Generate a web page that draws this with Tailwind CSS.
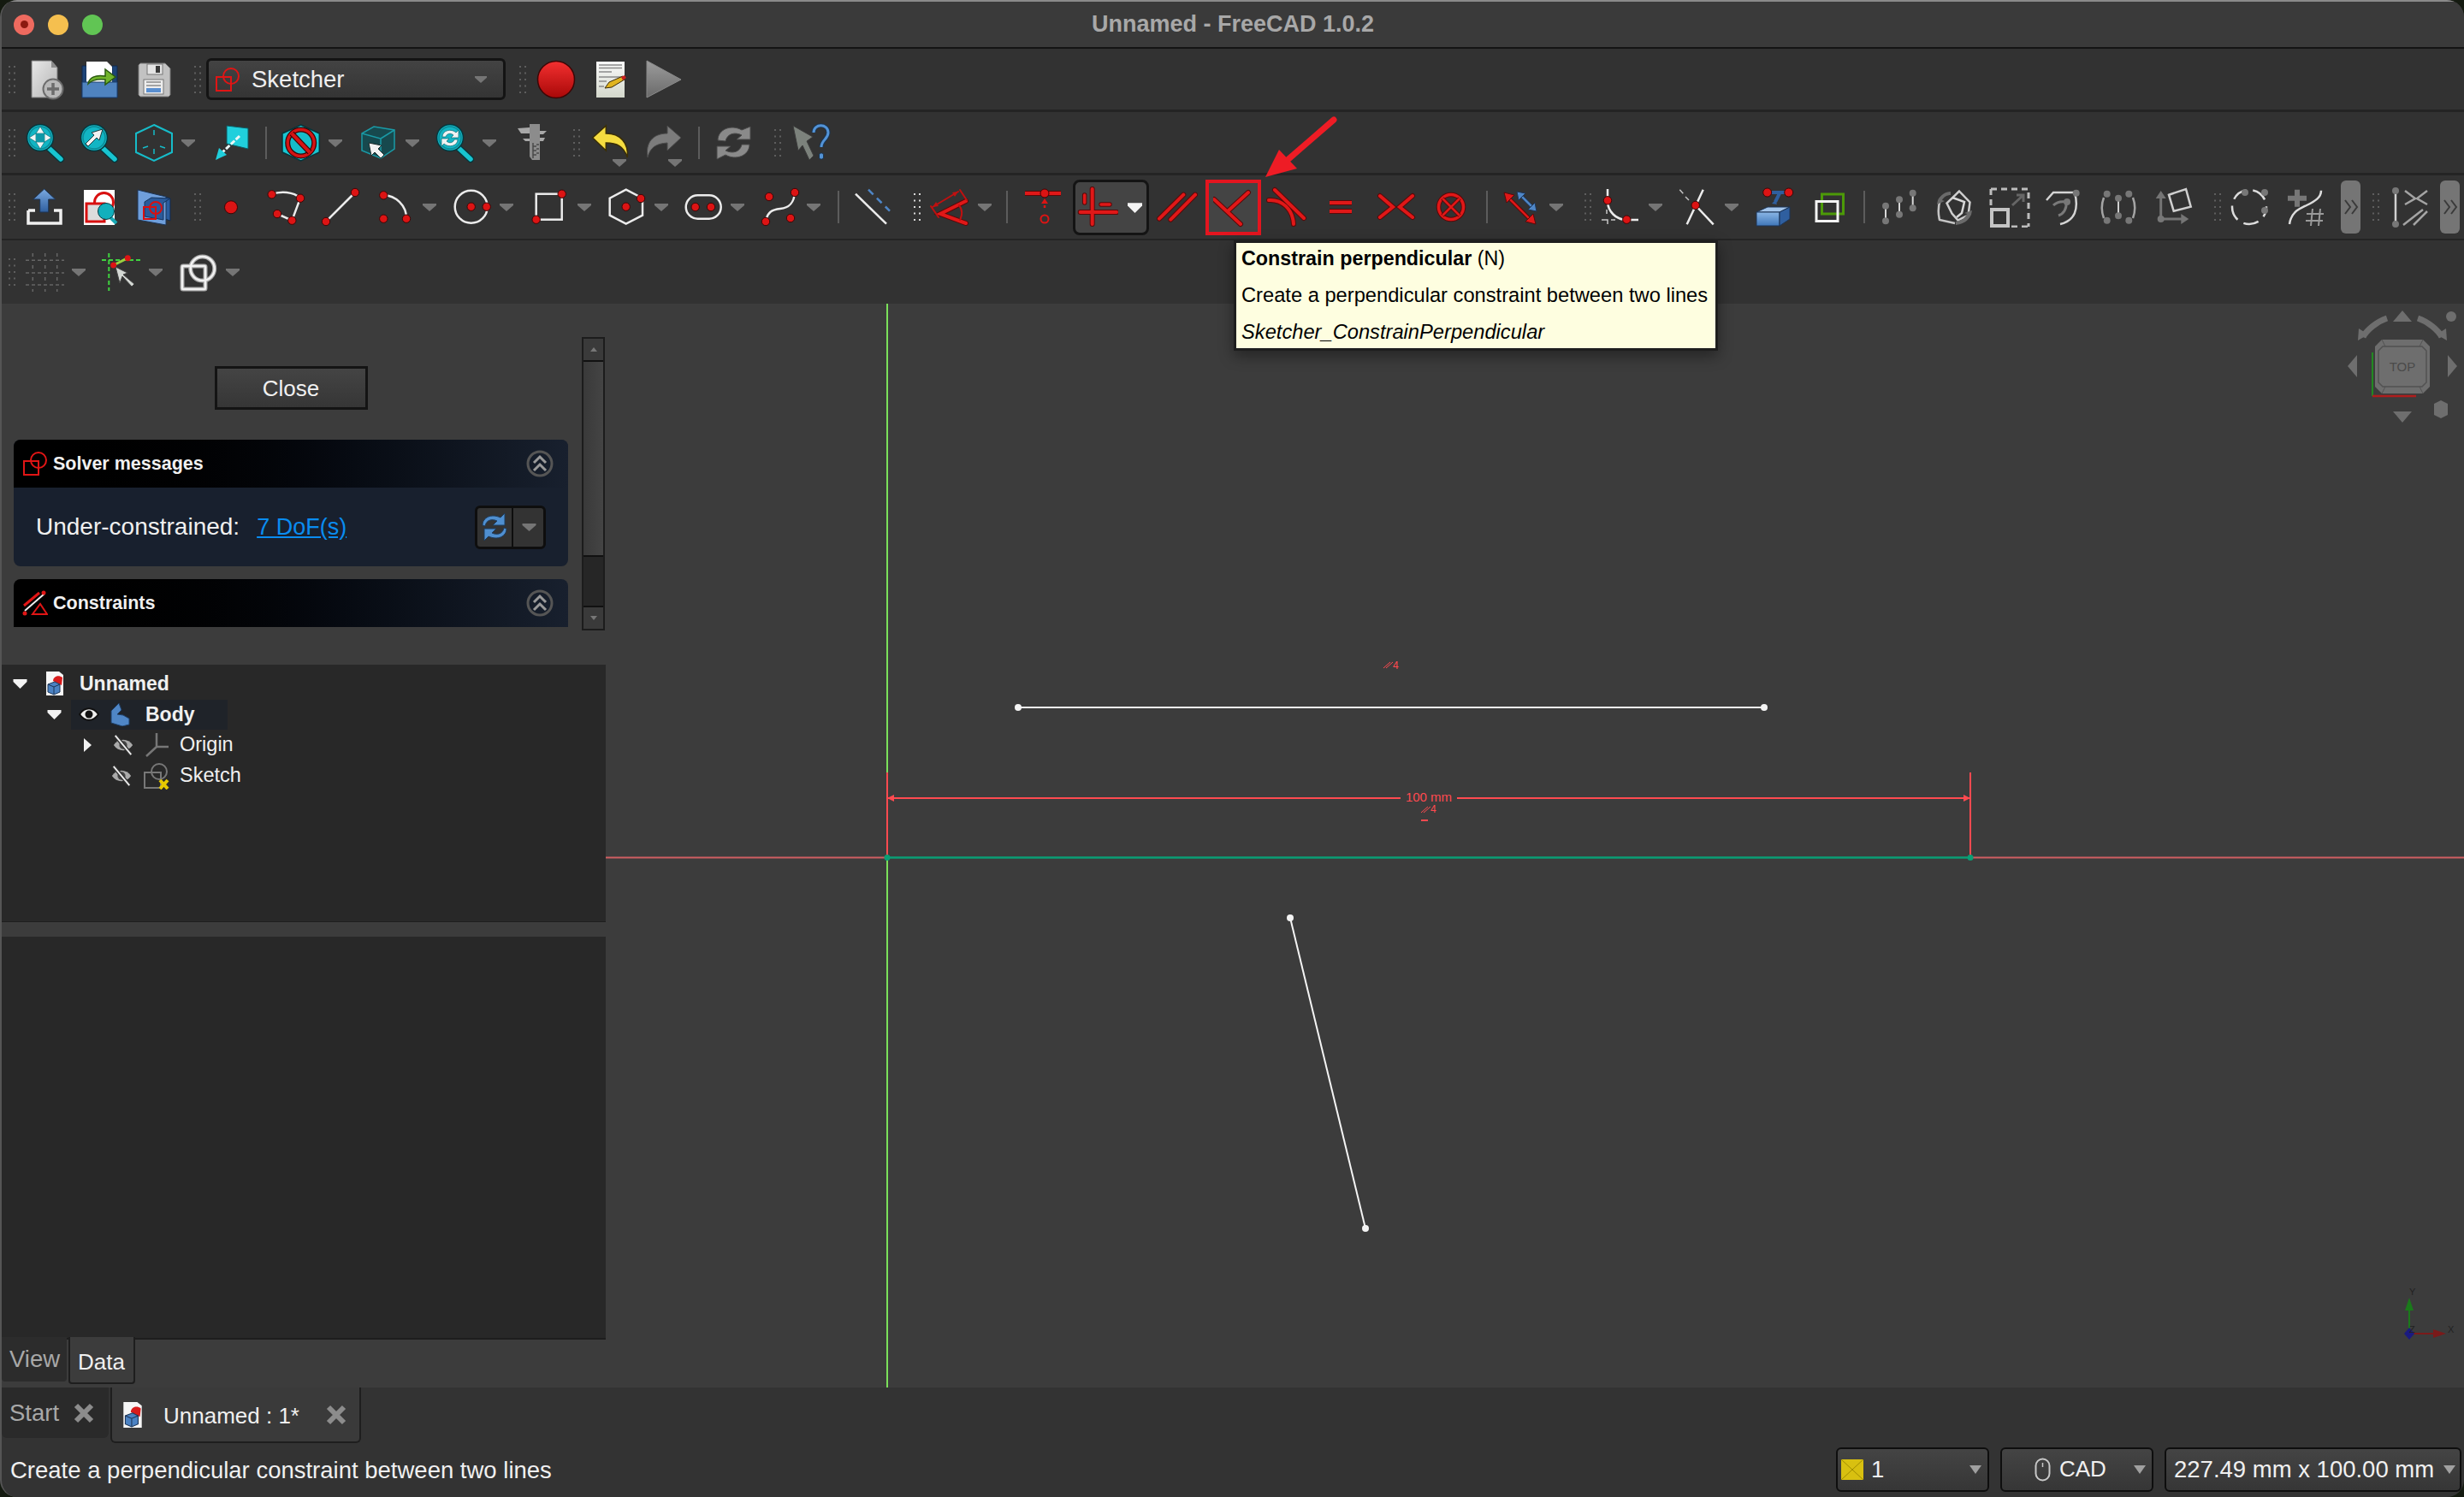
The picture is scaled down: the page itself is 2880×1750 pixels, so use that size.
<!DOCTYPE html>
<html>
<head>
<meta charset="utf-8">
<title>FreeCAD Sketcher</title>
<script src="https://cdn.jsdelivr.net/npm/@tailwindcss/browser@4"></script>
</head>
<body class="bg-[#141a10] overflow-hidden">
<!-- shared little icons -->
<svg class="hidden">
  <symbol id="arrow" viewBox="0 0 16 12"><path d="M0 2h16v2l-8 7-8-7z" fill="#757575"/></symbol>
  <symbol id="arrow-light" viewBox="0 0 16 12"><path d="M1 1h14l-7 10z" fill="#a0a0a0"/></symbol>
  <symbol id="arrow-white" viewBox="0 0 16 12"><path d="M0 1h16v3l-8 8-8-8z" fill="#f4f4f4"/></symbol>
  <symbol id="grip" viewBox="0 0 8 32"><g fill="#5e5e5e"><rect width="2" height="2"/><rect x="6" width="2" height="2"/><rect y="7.5" width="2" height="2"/><rect x="6" y="7.5" width="2" height="2"/><rect y="15" width="2" height="2"/><rect x="6" y="15" width="2" height="2"/><rect y="22.5" width="2" height="2"/><rect x="6" y="22.5" width="2" height="2"/><rect y="30" width="2" height="2"/><rect x="6" y="30" width="2" height="2"/></g></symbol>
  <symbol id="grip-light" viewBox="0 0 8 32"><g fill="#d8d8d8"><rect width="2" height="2"/><rect x="6" width="2" height="2"/><rect y="7.5" width="2" height="2"/><rect x="6" y="7.5" width="2" height="2"/><rect y="15" width="2" height="2"/><rect x="6" y="15" width="2" height="2"/><rect y="22.5" width="2" height="2"/><rect x="6" y="22.5" width="2" height="2"/><rect y="30" width="2" height="2"/><rect x="6" y="30" width="2" height="2"/></g></symbol>
  <symbol id="doc" viewBox="0 0 20 28"><path d="M0 0h15l5 4v24H0z" fill="#f6f6f6"/><path d="M8 11c0-5 6-8 11-4l-1 9z" fill="#d81c1c"/><path d="M2 15l8-3 6 3v9l-7 3-7-3z" fill="#4b82c3" stroke="#1c3557"/><path d="M2 15l7 3 7-3M9 18v9" stroke="#1c3557" fill="none"/></symbol>
  <symbol id="eye-off" viewBox="0 0 28 28"><path d="M2 14c6-9 18-9 24 0-6 9-18 9-24 0z" fill="#aaa"/><circle cx="14" cy="14" r="5" fill="#444"/><path d="M4 2l20 24" stroke="#333" stroke-width="5"/><path d="M4 2l20 24" stroke="#eee" stroke-width="2"/></symbol>
  <symbol id="chevrons" viewBox="0 0 32 32"><circle cx="16" cy="16" r="14" fill="none" stroke="#555" stroke-width="3"/><path d="M9 15l7-7 7 7M9 24l7-7 7 7" fill="none" stroke="#9a9a9a" stroke-width="3"/></symbol>
  <symbol id="sketch-red" viewBox="0 0 30 30"><rect x="2" y="12" width="17" height="16" fill="none" stroke="#e01515" stroke-width="2"/><circle cx="19" cy="11" r="9" fill="none" stroke="#e01515" stroke-width="2"/></symbol>
  <symbol id="lens" viewBox="0 0 48 48"><path d="M29 30l14 13" stroke="#06363c" stroke-width="8" stroke-linecap="round"/><path d="M29 30l14 13" stroke="#18c4d0" stroke-width="5.5" stroke-linecap="round"/><circle cx="19" cy="18" r="15.5" fill="#12b5c4" stroke="#06363c" stroke-width="1.5"/><circle cx="19" cy="18" r="13" fill="none" stroke="#0c8b97" stroke-width="1.5"/></symbol>
  <symbol id="over" viewBox="0 0 18 20"><path d="M2 2l6 8-6 8M10 2l6 8-6 8" fill="none" stroke="#3a3a3a" stroke-width="2"/></symbol>
</svg>

<div class="w-[2880px] h-[1750px] flex flex-col rounded-[20px] overflow-hidden bg-[#333333] text-[26px] text-[#f0f0f0] relative border-l-2 border-[#555555] font-['Liberation_Sans',Arial,sans-serif]">

  <!-- title bar -->
  <div class="h-[57px] shrink-0 flex items-center relative border-t-2 border-b-2 border-t-[#8a8a8a] border-b-[#141414] bg-[#3a3a3a]">
    <div class="flex items-center gap-[16px] ml-[14px]">
      <div class="w-[24px] h-[24px] rounded-full bg-[#ee6a5f] flex items-center justify-center"><div class="w-[9px] h-[9px] rounded-full bg-[#8c1a10]"></div></div>
      <div class="w-[24px] h-[24px] rounded-full bg-[#f5bf4f]"></div>
      <div class="w-[24px] h-[24px] rounded-full bg-[#61c554]"></div>
    </div>
    <div class="absolute inset-x-0 text-center text-[27px] font-bold text-[#a8a8a8]">Unnamed - FreeCAD 1.0.2</div>
  </div>

  <!-- toolbar 1 -->
  <div class="h-[74px] shrink-0 flex items-center bg-[#323232] border-b-[3px] border-[#242424]">
    <svg class="ml-[8px] w-[8px] h-[32px]"><use href="#grip"/></svg>
    <svg class="ml-[12px] w-[48px] h-[48px]" viewBox="0 0 48 48"><defs><linearGradient id="page" x1="0" y1="0" x2="1" y2="1"><stop offset="0" stop-color="#e8e8e8"/><stop offset="1" stop-color="#b4b4b4"/></linearGradient></defs><path d="M7 2h23l7 8v35H7z" fill="url(#page)" stroke="#777"/><path d="M30 2v8h7z" fill="#8c8c8c"/><circle cx="32" cy="35" r="11.5" fill="#b8b8b8" stroke="#6c6c6c" stroke-width="2"/><path d="M32 28v14M25 35h14" stroke="#6c6c6c" stroke-width="3.5"/></svg>
    <svg class="ml-[14px] w-[48px] h-[48px]" viewBox="0 0 48 48"><path d="M4 8h5v17h30V8h6v37H4z" fill="#1d4478" stroke="#12294a"/><path d="M9 3h24l6 6v18H9z" fill="#fff"/><path d="M4 27h41v18H4z" fill="#4f83bf" stroke="#1d3e6c"/><path d="M11 29c1-7 8-11 20-9v-8l12 9-12 9v-6c-9-1-15 0-20 5z" fill="#72b52c" stroke="#2a5a10" stroke-width="1.5"/></svg>
    <svg class="ml-[15px] w-[48px] h-[48px]" viewBox="0 0 48 48"><path d="M9 5h29l6 6v31l-2 2H9l-2-2V7z" fill="#c2c2c2" stroke="#777"/><rect x="17" y="6" width="18" height="12" fill="#e4e4e4" stroke="#777"/><rect x="27" y="8" width="5" height="8" fill="#3a3a3a"/><rect x="13" y="24" width="23" height="17" fill="#ededed" stroke="#777"/><path d="M16 27h17M16 31h17" stroke="#8a8a8a" stroke-width="1.5"/><rect x="16" y="34" width="17" height="5" fill="#5a8fd0"/></svg>
    <svg class="ml-[24px] w-[8px] h-[32px]"><use href="#grip"/></svg>
    <div class="ml-[6px] w-[350px] h-[49px] rounded-[6px] border-[3px] border-[#141414] bg-gradient-to-b from-[#434343] to-[#343434] flex items-center">
      <svg class="ml-[7px] w-[30px] h-[30px]"><use href="#sketch-red"/></svg>
      <span class="ml-[13px] text-[27.5px]">Sketcher</span>
      <svg class="ml-auto mr-[19px] w-[14px] h-[11px]"><use href="#arrow"/></svg>
    </div>
    <svg class="ml-[16px] w-[8px] h-[32px]"><use href="#grip"/></svg>
    <svg class="ml-[11px] w-[48px] h-[48px]" viewBox="0 0 48 48"><defs><linearGradient id="rec" x1="0" y1="0" x2="0" y2="1"><stop offset="0" stop-color="#f43030"/><stop offset="1" stop-color="#a80808"/></linearGradient></defs><circle cx="24" cy="24" r="21.5" fill="url(#rec)" stroke="#3c0606" stroke-width="1.5"/></svg>
    <svg class="ml-[15px] w-[48px] h-[48px]" viewBox="0 0 48 48"><defs><linearGradient id="memo" x1="0" y1="0" x2="0" y2="1"><stop offset="0" stop-color="#fafafa"/><stop offset="1" stop-color="#d4d8cc"/></linearGradient></defs><rect x="8" y="3" width="33" height="42" fill="url(#memo)"/><path d="M11 7h27M11 10.500h27M11 15h15M11 21h27M11 26h9M11 32h6" stroke="#8a8a8a" stroke-width="1.5"/><path d="M18 34l5-7 16-7 2 4-15 9z" fill="#e0b420" stroke="#3a2a08"/><path d="M37 21l2 4 4-3-2-3z" fill="#c82020"/></svg>
    <svg class="ml-[15px] w-[48px] h-[48px]" viewBox="0 0 48 48"><defs><linearGradient id="play" x1="0" y1="0" x2="0" y2="1"><stop offset="0" stop-color="#9c9c9c"/><stop offset="1" stop-color="#6a6a6a"/></linearGradient></defs><path d="M4 2l40 22L4 45z" fill="url(#play)" stroke="#8a8a8a"/></svg>
  </div>

  <!-- toolbar 2 -->
  <div class="h-[74px] shrink-0 flex items-center bg-[#323232] border-b-[3px] border-[#242424]">
    <svg class="ml-[8px] w-[8px] h-[32px]"><use href="#grip"/></svg>
    <svg class="ml-[10px] w-[48px] h-[48px]" viewBox="0 0 48 48"><use href="#lens"/><path d="M19 5l5 8H14zM19 31l5-8H14zM6 18l8-5v10zM32 18l-8-5v10z" fill="#f0f4f4" stroke="#0c6a74" stroke-width=".7"/><rect x="15" y="14" width="8" height="8" fill="#0e97a6"/></svg>
    <svg class="ml-[15px] w-[48px] h-[48px]" viewBox="0 0 48 48"><use href="#lens"/><path d="M29 8L16 12l3 3-10 10 3 3 10-10 3 3z" fill="#f2f2f2" stroke="#1a3a3e"/></svg>
    <svg class="ml-[16px] w-[48px] h-[48px]" viewBox="0 0 48 48"><path d="M25 3l21 10v22L25 45 4 35V13z" fill="none" stroke="#16bcc9" stroke-width="2"/><path d="M25 9v6M25 31v6M12 30l6-2M38 30l-6-2" stroke="#16bcc9" stroke-width="1.500"/></svg>
    <svg class="ml-[9px] w-[16px] h-[12px]"><use href="#arrow"/></svg>
    <svg class="ml-[18px] w-[48px] h-[48px]" viewBox="0 0 48 48"><path d="M19 4l25 3v24l-25-6z" fill="#20cfdc" stroke="#0c5a62"/><path d="M34 16L14 35" stroke="#eaf6f6" stroke-width="3" stroke-dasharray="6 2"/><path d="M6 44l4-14 9 8z" fill="#20cfdc"/></svg>
    <div class="ml-[16px] w-[2px] h-[38px] bg-[#5c5c5c]"></div>
    <svg class="ml-[16px] w-[48px] h-[48px]" viewBox="0 0 48 48"><path d="M23.700 3l21.600 10v22L23.700 45 2 35V13z" fill="#19c6d2" stroke="#06343a" stroke-width="1.500"/><circle cx="23.700" cy="24" r="15.500" fill="#17bcc9" stroke="#3a0606" stroke-width="6"/><circle cx="23.700" cy="24" r="15.500" fill="none" stroke="#d41414" stroke-width="3.500"/><path d="M13 13l21 22" stroke="#3a0606" stroke-width="6.500"/><path d="M13 13l21 22" stroke="#d41414" stroke-width="4"/></svg>
    <svg class="ml-[8px] w-[16px] h-[12px]"><use href="#arrow"/></svg>
    <svg class="ml-[17px] w-[48px] h-[48px]" viewBox="0 0 48 48"><path d="M6 13l14-8 24 4v22l-16 11-22-9z" fill="#0f5158" fill-opacity=".75" stroke="#1a9aa6" stroke-width="1.500"/><path d="M6 13l22 6v23M28 19l16-10" stroke="#1a9aa6" stroke-width="1.500" fill="none"/><path d="M14 24l3 15 4-4 7 7 4-4-7-7 4-4z" fill="#f2f2f2" stroke="#1a2a2a"/></svg>
    <svg class="ml-[9px] w-[16px] h-[12px]"><use href="#arrow"/></svg>
    <svg class="ml-[16px] w-[48px] h-[48px]" viewBox="0 0 48 48"><use href="#lens" x="1"/><path d="M11 17c0-8 11-10 16-5l3-3v9h-9l3-3c-3-3-8-2-9 2zM29 20c0 8-11 10-16 5l-3 3v-9h9l-3 3c3 3 8 2 9-2z" fill="#eef2f2" stroke="#0c6a74" stroke-width=".7"/></svg>
    <svg class="ml-[10px] w-[16px] h-[12px]"><use href="#arrow"/></svg>
    <svg class="ml-[19px] w-[48px] h-[48px]" viewBox="0 0 48 48"><path d="M20 2h12v42h-9l-3-4z" fill="#8c8c8c"/><path d="M6 7l14-1v7H10zM32 10h8l-4 4h-4zM32 18h6l-2 4h-4zM12 19h8v3h-5z" fill="#a8a8a8"/><path d="M24 24v18M28 26h3M28 31h3M28 36h3M24 28h4M24 33h4M24 38h4" stroke="#4a4a4a" stroke-width="1.500"/></svg>
    <svg class="ml-[23px] w-[8px] h-[32px]"><use href="#grip"/></svg>
    <div class="ml-[11px] relative w-[48px] h-[48px]">
      <svg class="w-[48px] h-[48px]" viewBox="0 0 48 48"><path d="M3.700 18L19.300 4v9C36 13 46 24 44.300 41 40 28 32 24 19.300 24v9z" fill="#f5dc40" stroke="#3a2e06" stroke-width="1.500"/></svg>
      <svg class="absolute left-[27px] top-[41px] w-[16px] h-[12px]"><use href="#arrow"/></svg>
    </div>
    <div class="ml-[15px] relative w-[48px] h-[48px]">
      <svg class="w-[48px] h-[48px]" viewBox="0 0 48 48"><path d="M44 18L28 4v9C11 13 2 24 5 41c3-12 10-16 23-17v9z" fill="#7c7c7c" stroke="#4a4a4a"/></svg>
      <svg class="absolute left-[29px] top-[41px] w-[16px] h-[12px]"><use href="#arrow"/></svg>
    </div>
    <div class="ml-[16px] w-[2px] h-[38px] bg-[#5c5c5c]"></div>
    <svg class="ml-[15px] w-[48px] h-[48px]" viewBox="0 0 48 48"><path d="M6 21C6 8 22 2 34 9l10-4v15H28l6-5c-8-4-17-2-19 7zM43 26c0 13-16 19-28 12L5 43V28h16l-6 5c8 4 17 2 19-7z" fill="#8a8a8a" stroke="#4a4a4a"/></svg>
    <svg class="ml-[24px] w-[8px] h-[32px]"><use href="#grip"/></svg>
    <svg class="ml-[11px] w-[48px] h-[48px]" viewBox="0 0 48 48"><path d="M3 4l23 13-7 5 8 17-5 5-8-17-5 6z" fill="#7c827c" stroke="#3c3c3c"/><path d="M27 12c0-11 17-11 17 0 0 8-8 8-8 17" fill="none" stroke="#1a3552" stroke-width="5"/><path d="M27 12c0-11 17-11 17 0 0 8-8 8-8 17" fill="none" stroke="#5393d6" stroke-width="3"/><rect x="33.500" y="36" width="5" height="7" rx="2" fill="#5393d6" stroke="#1a3552"/></svg>
  </div>

  <!-- toolbar 3 -->
  <div class="h-[76px] shrink-0 flex items-center bg-[#323232] border-b-2 border-[#242424]">
    <svg class="ml-[8px] w-[8px] h-[32px]"><use href="#grip"/></svg>
    <svg class="ml-[10px] w-[48px] h-[48px]" viewBox="0 0 48 48"><defs><linearGradient id="up" x1="0" y1="0" x2="0" y2="1"><stop offset="0" stop-color="#7aa9e0"/><stop offset="1" stop-color="#2f5f9f"/></linearGradient></defs><path d="M5 28v15h38V28H35" fill="none" stroke="#f0f0f0" stroke-width="3.500"/><path d="M5 28h8" stroke="#f0f0f0" stroke-width="3.500"/><path d="M23.700 3l13 12h-8v15h-10V15h-8z" fill="url(#up)" stroke="#1c3557"/></svg>
    <svg class="ml-[16px] w-[48px] h-[48px]" viewBox="0 0 48 48"><rect x="6" y="4" width="36" height="41" fill="#fff"/><circle cx="29.500" cy="18.500" r="11" fill="none" stroke="#d81010" stroke-width="3"/><rect x="9" y="20" width="21" height="21" fill="#dcdcdc" stroke="#d81010" stroke-width="3"/><path d="M36 35l8 8" stroke="#18a8b4" stroke-width="4"/><circle cx="32" cy="29" r="9.500" fill="#12b0bd" stroke="#053a40"/></svg>
    <svg class="ml-[15px] w-[48px] h-[48px]" viewBox="0 0 48 48"><path d="M35 11l9 3v26l-9-3z" fill="#2a5c9e" stroke="#12294a"/><path d="M6 4l33 8v33L6 39z" fill="#6f9fdc" stroke="#1c3557"/><path d="M14 18l8-5 22 1-8 5v20l-22-4z" fill="#2a5a9a" stroke="#16335a"/><circle cx="27" cy="25" r="7" fill="none" stroke="#d81010" stroke-width="2"/><rect x="13" y="24" width="14" height="14" fill="none" stroke="#d81010" stroke-width="2"/></svg>
    <svg class="ml-[24px] w-[8px] h-[32px]"><use href="#grip"/></svg>
    <svg class="ml-[11px] w-[48px] h-[48px]" viewBox="0 0 48 48"><circle cx="24" cy="24.300" r="7.500" fill="#dc1414" stroke="#3c0606"/></svg>
    <svg class="ml-[17px] w-[48px] h-[48px]" viewBox="0 0 48 48"><path d="M6.700 9.300C17 5 32 6 40 13.700L30.300 39.700 13 32" fill="none" stroke="#ececec" stroke-width="2.500"/><g fill="#dc1414" stroke="#3c0606"><circle cx="6.700" cy="9.300" r="4.700"/><circle cx="40" cy="13.700" r="4.700"/><circle cx="30.300" cy="39.700" r="4.700"/><circle cx="13" cy="32" r="4.700"/></g></svg>
    <svg class="ml-[15px] w-[48px] h-[48px]" viewBox="0 0 48 48"><path d="M7 41L41 7" stroke="#ececec" stroke-width="2.500"/><g fill="#dc1414" stroke="#3c0606"><circle cx="7" cy="41" r="4.700"/><circle cx="41" cy="7" r="4.700"/></g></svg>
    <svg class="ml-[16px] w-[48px] h-[48px]" viewBox="0 0 48 48"><path d="M10.300 10.300c14 0 27 12 26.700 27.400" fill="none" stroke="#ececec" stroke-width="2.500"/><g fill="#dc1414" stroke="#3c0606"><circle cx="10.300" cy="10.300" r="4.700"/><circle cx="37" cy="37.700" r="4.700"/><circle cx="10.300" cy="37.700" r="4.700"/></g></svg>
    <svg class="ml-[8px] w-[16px] h-[12px]"><use href="#arrow"/></svg>
    <svg class="ml-[16px] w-[48px] h-[48px]" viewBox="0 0 48 48"><circle cx="24.700" cy="23.700" r="19" fill="none" stroke="#ececec" stroke-width="2.500"/><g fill="#dc1414" stroke="#3c0606"><circle cx="24.700" cy="23.700" r="4.700"/><circle cx="42.700" cy="23.700" r="4.700"/></g></svg>
    <svg class="ml-[10px] w-[16px] h-[12px]"><use href="#arrow"/></svg>
    <svg class="ml-[18px] w-[48px] h-[48px]" viewBox="0 0 48 48"><rect x="8.700" y="8.700" width="30" height="30" fill="none" stroke="#ececec" stroke-width="2.500"/><g fill="#dc1414" stroke="#3c0606"><circle cx="8.700" cy="38.700" r="4.700"/><circle cx="38.700" cy="8.700" r="4.700"/></g></svg>
    <svg class="ml-[9px] w-[16px] h-[12px]"><use href="#arrow"/></svg>
    <svg class="ml-[17px] w-[48px] h-[48px]" viewBox="0 0 48 48"><path d="M23.700 3.700L43 13.700V33.700L23.700 43.700 4.700 33.700V13.700z" fill="none" stroke="#ececec" stroke-width="2.500"/><g fill="#dc1414" stroke="#3c0606"><circle cx="23.700" cy="23.700" r="4.700"/><circle cx="41" cy="14" r="4.700"/></g></svg>
    <svg class="ml-[9px] w-[16px] h-[12px]"><use href="#arrow"/></svg>
    <svg class="ml-[17px] w-[48px] h-[48px]" viewBox="0 0 48 48"><rect x="3.700" y="10.300" width="41" height="27.400" rx="13.700" fill="none" stroke="#ececec" stroke-width="2.500"/><g fill="#dc1414" stroke="#3c0606"><circle cx="14.700" cy="24" r="4.700"/><circle cx="33" cy="24" r="4.700"/></g></svg>
    <svg class="ml-[8px] w-[16px] h-[12px]"><use href="#arrow"/></svg>
    <svg class="ml-[18px] w-[48px] h-[48px]" viewBox="0 0 48 48"><path d="M7 41C9 30 14 27 24 26 34 25 40 20 41 7" fill="none" stroke="#ececec" stroke-width="2.500"/><g fill="#dc1414" stroke="#3c0606"><circle cx="7" cy="41" r="4.700"/><circle cx="41" cy="7" r="4.700"/><circle cx="11" cy="12" r="4.700"/><circle cx="36" cy="37" r="4.700"/></g></svg>
    <svg class="ml-[7px] w-[16px] h-[12px]"><use href="#arrow"/></svg>
    <div class="ml-[20px] w-[2px] h-[38px] bg-[#5c5c5c]"></div>
    <svg class="ml-[14px] w-[48px] h-[48px]" viewBox="0 0 48 48"><path d="M5 8.700L41 43.700" stroke="#ececec" stroke-width="2.500"/><path d="M20 3.700L45 28.700" stroke="#4f86c6" stroke-width="2.500" stroke-dasharray="8 6"/></svg>
    <svg class="ml-[25px] w-[8px] h-[32px]"><use href="#grip-light"/></svg>
    <svg class="ml-[10px] w-[48px] h-[48px]" viewBox="0 0 48 48"><g fill="none" stroke-linecap="round"><path d="M43 17L13 32l30 11" stroke="#5a0808" stroke-width="6"/><path d="M43 17L13 32l30 11" stroke="#e01818" stroke-width="4"/><path d="M4 24L34 6" stroke="#c01010" stroke-width="2"/><path d="M2 23l9 13M36 4l8 12" stroke="#c01010" stroke-width="2"/><path d="M35 22c4 5 4 11 1 17" stroke="#c01010" stroke-width="2"/></g><path d="M34 6l-7 1 3 5zM4 24l7-1-3-5z" fill="#c01010"/></svg>
    <svg class="ml-[9px] w-[16px] h-[12px]"><use href="#arrow"/></svg>
    <div class="ml-[17px] w-[2px] h-[38px] bg-[#5c5c5c]"></div>
    <svg class="ml-[19px] w-[48px] h-[48px]" viewBox="0 0 48 48"><path d="M1 8h42" stroke="#5a0808" stroke-width="6"/><path d="M1 8h42" stroke="#e01818" stroke-width="4"/><circle cx="24" cy="8" r="5" fill="#dc1414" stroke="#3c0606"/><path d="M24 14l-4 6h8z" fill="#dc1414"/><path d="M24 22v8" stroke="#dc1414" stroke-width="2.500" stroke-dasharray="3 5"/><circle cx="24" cy="38" r="4.500" fill="none" stroke="#dc1414" stroke-width="2"/></svg>
    <div class="ml-[9px] w-[89px] h-[65px] rounded-[8px] border-[3px] border-[#141414] bg-[#444444] flex items-center">
      <svg class="ml-[2px] w-[48px] h-[48px]" viewBox="0 0 48 48"><g stroke-linecap="round"><path d="M3.700 30H46M17.700 3V44" stroke="#5a0808" stroke-width="6"/><path d="M3.700 30H46M17.700 3V44" stroke="#e01818" stroke-width="4"/><path d="M8.700 10V19M28 21H38" stroke="#5a0808" stroke-width="5.500"/><path d="M8.700 10V19M28 21H38" stroke="#e01818" stroke-width="3.500"/></g></svg>
      <svg class="ml-[11px] w-[17px] h-[13px]"><use href="#arrow-white"/></svg>
    </div>
    <svg class="ml-[9px] w-[48px] h-[48px]" viewBox="0 0 48 48"><g stroke-linecap="round"><path d="M3 37.700L31.300 9.700M16.300 38.700L45 9.700" stroke="#5a0808" stroke-width="6"/><path d="M3 37.700L31.300 9.700M16.300 38.700L45 9.700" stroke="#e01818" stroke-width="4"/></g></svg>
    <div class="ml-[9px] w-[65px] h-[65px] border-[4px] border-[#e4151f] bg-[#444444] flex items-center justify-center">
      <svg class="w-[48px] h-[48px]" viewBox="0 0 48 48"><g stroke-linecap="round"><path d="M1 15L32 44M41 7L18 28" stroke="#5a0808" stroke-width="6"/><path d="M1 15L32 44M41 7L18 28" stroke="#e01818" stroke-width="4"/></g></svg>
    </div>
    <svg class="ml-[6px] w-[48px] h-[48px]" viewBox="0 0 48 48"><g fill="none" stroke-linecap="round"><path d="M10 4L44 37M3 16C18 15 31 26 32 44" stroke="#5a0808" stroke-width="6"/><path d="M10 4L44 37M3 16C18 15 31 26 32 44" stroke="#e01818" stroke-width="4"/></g></svg>
    <svg class="ml-[16px] w-[48px] h-[48px]" viewBox="0 0 48 48"><path d="M10 19h26M10 29h26" stroke="#5a0808" stroke-width="6"/><path d="M10 19h26M10 29h26" stroke="#e01818" stroke-width="4"/></svg>
    <svg class="ml-[16px] w-[48px] h-[48px]" viewBox="0 0 48 48"><g fill="none" stroke-linecap="round"><path d="M5 11l15 13L5 36M43 11L28 24l15 12" stroke="#5a0808" stroke-width="6"/><path d="M5 11l15 13L5 36M43 11L28 24l15 12" stroke="#e01818" stroke-width="4"/></g></svg>
    <svg class="ml-[16px] w-[48px] h-[48px]" viewBox="0 0 48 48"><circle cx="24" cy="24" r="14.500" fill="none" stroke="#5a0808" stroke-width="5.500"/><circle cx="24" cy="24" r="14.500" fill="none" stroke="#e01818" stroke-width="3.500"/><path d="M14 14l20 20M34 14L14 34" stroke="#5a0808" stroke-width="4.500"/><path d="M14 14l20 20M34 14L14 34" stroke="#e01818" stroke-width="2.500"/></svg>
    <div class="ml-[17px] w-[2px] h-[38px] bg-[#5c5c5c]"></div>
    <svg class="ml-[14px] w-[48px] h-[48px]" viewBox="0 0 48 48"><path d="M8 11L38 41" stroke="#5a0808" stroke-width="4.500"/><path d="M8 11L38 41" stroke="#e01818" stroke-width="2.500"/><path d="M5 7l12 3-9 9zM42 44l-12-3 9-9z" fill="#e01818" stroke="#5a0808"/><path d="M23 9L41 27" stroke="#1c3557" stroke-width="4"/><path d="M23 9L41 27" stroke="#4f86c6" stroke-width="2.500"/><path d="M20 6l10 2-8 8zM43 29l-10-2 8-8z" fill="#4f86c6" stroke="#1c3557"/></svg>
    <svg class="ml-[10px] w-[16px] h-[12px]"><use href="#arrow"/></svg>
    <svg class="ml-[25px] w-[8px] h-[32px]"><use href="#grip"/></svg>
    <svg class="ml-[11px] w-[48px] h-[48px]" viewBox="0 0 48 48"><path d="M8 3v14c0 12 10 22 22 22h14" fill="none" stroke="#ececec" stroke-width="2.500"/><path d="M7 27v5M1 39h7v5M12 39h5" stroke="#c8c8c8" stroke-width="1.500" fill="none"/><g fill="#dc1414" stroke="#3c0606"><circle cx="8" cy="16.300" r="4.700"/><circle cx="30.300" cy="38.700" r="4.700"/></g></svg>
    <svg class="ml-[8px] w-[16px] h-[12px]"><use href="#arrow"/></svg>
    <svg class="ml-[14px] w-[48px] h-[48px]" viewBox="0 0 48 48"><path d="M33.700 3.700L14.700 44.300M24.700 22L45.700 44.300" stroke="#ececec" stroke-width="2.500"/><path d="M6.300 3.700l4 4.500M13 12l4 4" stroke="#c4c4c4" stroke-width="1.500"/><circle cx="24.700" cy="22" r="4.700" fill="#dc1414" stroke="#3c0606"/></svg>
    <svg class="ml-[11px] w-[16px] h-[12px]"><use href="#arrow"/></svg>
    <svg class="ml-[20px] w-[48px] h-[48px]" viewBox="0 0 48 48"><defs><linearGradient id="cube" x1="0" y1="0" x2="0" y2="1"><stop offset="0" stop-color="#8ab6e6"/><stop offset="1" stop-color="#3f76b8"/></linearGradient></defs><path d="M13.700 7H39M28 8l-5 10" stroke="#2f5f9f" stroke-width="4"/><path d="M23 16l-4 4 6 1z" fill="#2f5f9f"/><circle cx="13.700" cy="7" r="5" fill="#dc1414" stroke="#3c0606"/><circle cx="38.700" cy="7" r="5" fill="#dc1414" stroke="#3c0606"/><path d="M1 30l13-6h26l-12 6z" fill="#a4c6ec" stroke="#1c3557"/><path d="M1 30h27v16H1z" fill="url(#cube)" stroke="#1c3557"/><path d="M28 30l12-6v14l-12 8z" fill="#2f5f9f" stroke="#1c3557"/></svg>
    <svg class="ml-[13px] w-[48px] h-[48px]" viewBox="0 0 48 48"><rect x="16.500" y="9" width="25" height="23" fill="none" stroke="#4c9a08" stroke-width="3"/><rect x="10" y="17.500" width="25" height="23" fill="none" stroke="#f4f4f4" stroke-width="3"/></svg>
    <div class="ml-[17px] w-[2px] h-[38px] bg-[#5c5c5c]"></div>
    <svg class="ml-[16px] w-[48px] h-[48px]" viewBox="0 0 48 48"><path d="M8 23V40M24 15V33M39.700 8V25" stroke="#d8d8d8" stroke-width="2"/><g fill="#777"><circle cx="8" cy="22.700" r="4"/><circle cx="8" cy="40.300" r="4"/><circle cx="24" cy="15.300" r="4"/><circle cx="24" cy="32.700" r="4"/><circle cx="39.700" cy="7.700" r="4"/><circle cx="39.700" cy="25.300" r="4"/></g></svg>
    <svg class="ml-[16px] w-[48px] h-[48px]" viewBox="0 0 48 48"><path d="M30 5.500l12.500 13-2 15-12 6-7-8-6-12z" fill="none" stroke="#cfcfcf" stroke-width="2.500"/><path d="M22 13l14 5-3 13-6 5" fill="none" stroke="#d8d8d8" stroke-width="2.500"/><path d="M8 15c-3 9-3 16-1 24l18 4" fill="none" stroke="#c4c4c4" stroke-width="2.500"/><path d="M5 16C8 10 14 6 20 6v4c-4 0-8 2-10 6l3 1-9 4zM44 33c-4 8-10 11-18 12v-4c6-1 10-3 13-9l-3-1 9-3z" fill="#6a6a6a"/></svg>
    <svg class="ml-[17px] w-[48px] h-[48px]" viewBox="0 0 48 48"><path d="M2 3h44v44M2 3v20M26 47h20" fill="none" stroke="#bdbdbd" stroke-width="3" stroke-dasharray="7 5"/><rect x="3" y="27" width="19" height="19" fill="none" stroke="#c4c4c4" stroke-width="4"/><path d="M27 22l13-12m-8 0h8v8" stroke="#666" stroke-width="3" fill="none"/></svg>
    <svg class="ml-[13px] w-[48px] h-[48px]" viewBox="0 0 48 48"><path d="M6 16l8-9h25c5 20 0 33-17 37" fill="none" stroke="#d4d4d4" stroke-width="2.500"/><path d="M14 22c4-4 9-5 15-4 1 8-3 14-9 16" fill="none" stroke="#7a7a7a" stroke-width="3"/><circle cx="40.700" cy="7.700" r="4" fill="#777"/><circle cx="30" cy="18" r="4" fill="#777"/></svg>
    <svg class="ml-[18px] w-[48px] h-[48px]" viewBox="0 0 48 48"><path d="M7 13c-3 8-3 16 0 24M41 13c3 8 3 16 0 24" fill="none" stroke="#a4a4a4" stroke-width="2.500"/><path d="M24 14v20" stroke="#d0d0d0" stroke-width="2"/><g fill="#777"><circle cx="10.700" cy="8.700" r="4"/><circle cx="10.700" cy="39.700" r="4"/><circle cx="24" cy="13.700" r="4"/><circle cx="24" cy="34.300" r="4"/><circle cx="36.300" cy="8.700" r="4"/><circle cx="36.300" cy="39.700" r="4"/></g></svg>
    <svg class="ml-[16px] w-[48px] h-[48px]" viewBox="0 0 48 48"><path d="M9.700 38V12M9.700 38H34" stroke="#757575" stroke-width="3"/><path d="M9.700 5l6 9h-12zM42.300 38l-9-6v12z" fill="#757575"/><path d="M19 9.700L39 3l5.700 20.700-20 5z" fill="none" stroke="#cfcfcf" stroke-width="2.500"/><circle cx="9.700" cy="38" r="4" fill="#777"/></svg>
    <svg class="ml-[24px] w-[8px] h-[32px]"><use href="#grip"/></svg>
    <svg class="ml-[9px] w-[48px] h-[48px]" viewBox="0 0 48 48"><circle cx="24" cy="24" r="20" fill="none" stroke="#dcdcdc" stroke-width="2.500" stroke-dasharray="18 8" stroke-dashoffset="6"/><g fill="#777"><circle cx="19" cy="7" r="4"/><circle cx="42" cy="7" r="4"/><circle cx="42" cy="28" r="4"/></g></svg>
    <svg class="ml-[18px] w-[48px] h-[48px]" viewBox="0 0 48 48"><path d="M14 3.700v20M3 13.700h22" stroke="#777" stroke-width="6"/><path d="M5 44c2-14 10-17 20-22C35 17 42 13 42 4.700" fill="none" stroke="#dcdcdc" stroke-width="2.500"/><path d="M30 46l2-20M39 46l2-20M25 32h20M24 40h20" stroke="#9a9a9a" stroke-width="2"/></svg>
    <div class="ml-[17px] w-[23px] h-[62px] rounded-[6px] bg-[#757575] flex items-center justify-center"><svg class="w-[18px] h-[20px]"><use href="#over"/></svg></div>
    <svg class="ml-[14px] w-[8px] h-[32px]"><use href="#grip"/></svg>
    <svg class="ml-[12px] w-[48px] h-[48px]" viewBox="0 0 48 48"><path d="M7 5v39" stroke="#d0d0d0" stroke-width="2.500"/><circle cx="7" cy="5" r="4" fill="#777"/><circle cx="7" cy="44" r="4" fill="#777"/><path d="M18 5l12 9-12 7M44 5L32 14l12 7M16 45L39 27M28 45L44 29" fill="none" stroke="#a4a4a4" stroke-width="2.500"/></svg>
    <div class="ml-[11px] w-[23px] h-[62px] rounded-[6px] bg-[#757575] flex items-center justify-center"><svg class="w-[18px] h-[20px]"><use href="#over"/></svg></div>
  </div>

  <!-- toolbar 4 -->
  <div class="h-[74px] shrink-0 flex items-center bg-[#323232]">
    <svg class="ml-[8px] w-[8px] h-[32px]"><use href="#grip"/></svg>
    <svg class="ml-[10px] w-[48px] h-[48px]" viewBox="0 0 48 48"><path d="M2 10.300h45M2 25h45M2 39h45" stroke="#666" stroke-width="1.500" stroke-dasharray="4 3"/><path d="M10.300 2v45M24.700 2v45M38.700 2v45" stroke="#666" stroke-width="1.500" stroke-dasharray="4 10"/></svg>
    <svg class="ml-[8px] w-[16px] h-[12px]"><use href="#arrow"/></svg>
    <svg class="ml-[17px] w-[48px] h-[48px]" viewBox="0 0 48 48"><path d="M2 10h45M10.300 2v44" stroke="#3fd43f" stroke-width="2" stroke-dasharray="5 3"/><path d="M15.700 16L32.300 7.700" stroke="#9ad040" stroke-width="3"/><circle cx="15.700" cy="16" r="3.500" fill="#dc1414"/><circle cx="32.300" cy="7.700" r="3.500" fill="#dc1414"/><path d="M18 18l14 7-5 2 13 11-3 3-11-12-3 8z" fill="#d4d8d4" stroke="#444"/></svg>
    <svg class="ml-[9px] w-[16px] h-[12px]"><use href="#arrow"/></svg>
    <svg class="ml-[17px] w-[48px] h-[48px]" viewBox="0 0 48 48"><g fill="none"><rect x="6" y="17" width="27" height="27" rx="1" stroke="#a8a8a8" stroke-width="5"/><circle cx="29.700" cy="20" r="14" stroke="#a8a8a8" stroke-width="5"/><rect x="6" y="17" width="27" height="27" rx="1" stroke="#f2f2f2" stroke-width="2.500"/><circle cx="29.700" cy="20" r="14" stroke="#f2f2f2" stroke-width="2.500"/></g></svg>
    <svg class="ml-[9px] w-[16px] h-[12px]"><use href="#arrow"/></svg>
  </div>

  <!-- main area -->
  <div class="flex-1 min-h-0 flex bg-[#3c3c3c]">
    <!-- left side -->
    <div class="w-[706px] shrink-0 flex flex-col">
      <div class="h-[422px] shrink-0 flex">
        <div class="ml-[14px] w-[648px] flex flex-col">
          <button class="mt-[73px] self-center w-[179px] h-[51px] border-[3px] border-[#141414] bg-gradient-to-b from-[#444444] to-[#363636] text-[26px] pt-[1px]">Close</button>
          <div class="mt-[35px] rounded-[8px] overflow-hidden bg-[#18202e]">
            <div class="h-[56px] flex items-center bg-gradient-to-r from-[#000000] to-[#18202e]">
              <svg class="ml-[10px] w-[30px] h-[30px]"><use href="#sketch-red"/></svg>
              <span class="ml-[6px] text-[21.500px] font-bold">Solver messages</span>
              <svg class="ml-auto mr-[17px] w-[32px] h-[32px]"><use href="#chevrons"/></svg>
            </div>
            <div class="h-[92px] flex items-center">
              <span class="ml-[26px] text-[28px]">Under-constrained:</span>
              <span class="ml-[20px] text-[27px] text-[#0a8cf0] underline">7 DoF(s)</span>
              <div class="ml-auto mr-[26px] w-[83px] h-[51px] rounded-[6px] border-[3px] border-[#0e0e0e] bg-[#333333] flex items-center">
                <svg class="w-[40px] h-[40px]" viewBox="0 0 40 40"><path d="M6 18C6 9 16 4 27 9l5-5v14H18l5-5c-6-3-13-1-14 6zM34 22c0 9-10 14-21 9l-5 5V22h14l-5 5c6 3 13 1 14-6z" fill="#4f8fd0" stroke="#1d3c5e"/></svg>
                <div class="w-[2px] h-full bg-[#0e0e0e]"></div>
                <svg class="ml-[10px] w-[17px] h-[12px]"><use href="#arrow"/></svg>
              </div>
            </div>
          </div>
          <div class="mt-[15px] h-[56px] rounded-t-[8px] flex items-center bg-gradient-to-r from-[#000000] to-[#18202e]">
            <svg class="ml-[10px] w-[30px] h-[30px]" viewBox="0 0 30 30"><path d="M3 24L26 4" stroke="#eee" stroke-width="2"/><path d="M2 18L20 3" stroke="#e01515" stroke-width="3"/><path d="M12 28l9-12 8 12z" fill="none" stroke="#e01515" stroke-width="2"/><circle cx="3" cy="27" r="2.500" fill="#e01515"/><circle cx="25" cy="3" r="2.500" fill="#e01515"/></svg>
            <span class="ml-[6px] text-[21.500px] font-bold">Constraints</span>
            <svg class="ml-auto mr-[17px] w-[32px] h-[32px]"><use href="#chevrons"/></svg>
          </div>
        </div>
        <div class="ml-[16px] mt-[39px] w-[27px] h-[343px] flex flex-col border-2 border-[#1c1c1c] bg-[#262626]">
          <div class="h-[27px] bg-[#3a3a3a] border-b-2 border-[#111111] flex items-center justify-center"><div class="w-0 h-0 border-x-[4px] border-x-transparent border-b-[5px] border-b-[#777777]"></div></div>
          <div class="h-[228px] bg-gradient-to-r from-[#3a3a3a] to-[#444444] border-b-2 border-[#111111]"></div>
          <div class="flex-1"></div>
          <div class="h-[27px] bg-[#3a3a3a] border-t-2 border-[#111111] flex items-center justify-center"><div class="w-0 h-0 border-x-[4px] border-x-transparent border-t-[5px] border-t-[#777777]"></div></div>
        </div>
      </div>

      <div class="h-[301px] shrink-0 bg-[#282828] pt-[4px] border-b border-[#1e1e1e]">
        <div class="h-[36px] flex items-center">
          <svg class="ml-[13px] w-[17px] h-[12px]"><use href="#arrow-white"/></svg>
          <svg class="ml-[22px] w-[20px] h-[28px]"><use href="#doc"/></svg>
          <span class="ml-[19px] text-[23px] font-bold">Unnamed</span>
        </div>
        <div class="h-[36px] flex items-center">
          <svg class="ml-[53px] w-[17px] h-[12px]"><use href="#arrow-white"/></svg>
          <div class="ml-[11px] w-[183px] h-[35px] bg-[#1f2329] flex items-center">
            <svg class="ml-[9px] w-[24px] h-[18px]" viewBox="0 0 24 18"><path d="M1 9c6-9 16-9 22 0-6 9-16 9-22 0z" fill="#eee" stroke="#111" stroke-width="2"/><circle cx="12" cy="9" r="4.500" fill="#111"/></svg>
            <svg class="ml-[11px] w-[26px] h-[28px]" viewBox="0 0 26 28"><path d="M3 10l9-9 3 8-5 5 7 1 7 4v7l-8 2-13-4z" fill="#4f86c6" stroke="#1f3f66"/></svg>
            <span class="ml-[17px] text-[23px] font-bold">Body</span>
          </div>
        </div>
        <div class="h-[36px] flex items-center">
          <div class="ml-[96px] w-0 h-0 border-y-[8px] border-y-transparent border-l-[9px] border-l-[#f2f2f2]"></div>
          <svg class="ml-[24px] w-[26px] h-[26px]"><use href="#eye-off"/></svg>
          <svg class="ml-[12px] w-[30px] h-[30px]" viewBox="0 0 30 30"><path d="M14 1v16M14 17h14M14 17L2 28" stroke="#777" stroke-width="2.500" fill="none"/></svg>
          <span class="ml-[11px] text-[23.500px]">Origin</span>
        </div>
        <div class="h-[36px] flex items-center">
          <svg class="ml-[127px] w-[26px] h-[26px]"><use href="#eye-off"/></svg>
          <svg class="ml-[12px] w-[32px] h-[32px]" viewBox="0 0 32 32"><rect x="2" y="12" width="19" height="18" fill="none" stroke="#777" stroke-width="2"/><circle cx="19" cy="11" r="9" fill="none" stroke="#777" stroke-width="2"/><path d="M20 21l9 10M29 21l-9 10" stroke="#e6c800" stroke-width="4"/></svg>
          <span class="ml-[11px] text-[23.500px]">Sketch</span>
        </div>
      </div>

      <div class="mt-[17px] h-[471px] shrink-0 bg-[#282828] border-b-2 border-[#1e1e1e]"></div>

      <div class="-mt-[3px] flex items-start">
        <div class="w-[76px] h-[52px] bg-[#2c2c2c] rounded-b-[4px] text-[#a8a8a8] text-[27.500px] flex items-center pl-[9px]">View</div>
        <div class="ml-[2px] w-[78px] h-[55px] bg-[#3c3c3c] border-x-2 border-b-2 border-[#1e1e1e] rounded-b-[4px] flex items-center pl-[9px] pt-[5px]">Data</div>
      </div>
    </div>

    <!-- 3D view, coordinates are the window's own -->
    <div class="flex-1 min-w-0">
      <svg class="block w-[2172px] h-[1267px]" viewBox="708 355 2172 1267" font-family="Liberation Sans, Arial, sans-serif">
        <path d="M708 1002.500H1037M2303 1002.500H2880" stroke="#cf5f62" stroke-width="2"/>
        <path d="M1037 355V903M1037 1003V1622" stroke="#7be05a" stroke-width="2"/>
        <path d="M1037 903V1002M2303 903V1002" stroke="#ff4a50" stroke-width="2"/>
        <path d="M1037 933H1637M1703 933H2303" stroke="#ff4a50" stroke-width="2"/>
        <path d="M1037 933l8-4v8zM2303 933l-8-4v8z" fill="#ff4a50"/>
        <path d="M1037 1002.500H2303" stroke="#0a9e75" stroke-width="2.500"/>
        <circle cx="1037" cy="1002.500" r="3.500" fill="#0a9e75"/>
        <circle cx="2303" cy="1002.500" r="3.500" fill="#0a9e75"/>
        <text x="1670" y="937" font-size="15" fill="#ff4a50" text-anchor="middle">100 mm</text>
        <path d="M1661 950l8-7M1664 950l8-7" stroke="#ff4a50"/>
        <text x="1672" y="950" font-size="12" fill="#ff4a50">4</text>
        <path d="M1661 959h8" stroke="#ff4a50" stroke-width="2"/>
        <path d="M1617 781l8-7M1620 781l8-7" stroke="#ff4a50"/>
        <text x="1628" y="782" font-size="12" fill="#ff4a50">4</text>
        <path d="M1190 827H2062" stroke="#f4f4f4" stroke-width="2"/>
        <circle cx="1190" cy="827" r="4" fill="#f4f4f4"/>
        <circle cx="2062" cy="827" r="4" fill="#f4f4f4"/>
        <path d="M1508 1073L1596 1436" stroke="#f4f4f4" stroke-width="2"/>
        <circle cx="1508" cy="1073" r="4" fill="#f4f4f4"/>
        <circle cx="1596" cy="1436" r="4" fill="#f4f4f4"/>

        <!-- nav cube -->
        <g fill="#6e6e6e">
          <path d="M2808 363l11 13h-22zM2808 494l11-13h-22zM2744 428l11-13v26zM2872 428l-11-13v26z"/>
          <circle cx="2865" cy="370" r="6"/>
          <path d="M2784 397h48l8 8v47l-8 8h-48l-8-8v-47z"/>
          <path d="M2845 472l8-4 8 4v13l-8 4-8-4z"/>
        </g>
        <path d="M2785 405h46l5 5v37l-5 5h-46l-5-5v-37z" fill="none" stroke="#525252" stroke-width="1.500"/>
        <path d="M2784 397l4 8M2832 397l-4 8M2784 460l4-8M2832 460l-4-8" stroke="#525252"/>
        <path d="M2790 372c-12 4-24 14-28 22M2826 372c12 4 24 14 28 22" fill="none" stroke="#6e6e6e" stroke-width="7"/>
        <path d="M2756 398l1-14 11 7zM2860 398l-1-14-11 7z" fill="#6e6e6e"/>
        <text x="2808" y="434" font-size="15" fill="#4a4a4a" text-anchor="middle">TOP</text>
        <path d="M2773 412V463" stroke="#19a319" stroke-width="1.500"/>
        <path d="M2773 463H2824" stroke="#b01c1c" stroke-width="2.500"/>

        <!-- axis cross -->
        <path d="M2816 1559V1530" stroke="#1a7a1a" stroke-width="2"/>
        <path d="M2816 1517l5 15h-10z" fill="#1a7a1a"/>
        <path d="M2816 1559H2846" stroke="#7a1a1a" stroke-width="2"/>
        <path d="M2859 1559l-15-5v10z" fill="#7a1a1a"/>
        <path d="M2816 1552l6 7-6 7-6-7z" fill="#1a1a80"/>
        <text x="2816" y="1514" font-size="11" fill="#222">Y</text>
        <text x="2816" y="1558" font-size="11" fill="#222">Z</text>
        <text x="2861" y="1558" font-size="11" fill="#222">X</text>
      </svg>
    </div>
  </div>

  <!-- document tabs -->
  <div class="h-[65px] shrink-0 flex items-start">
    <div class="w-[125px] h-[59px] bg-[#2a2a2a] rounded-b-[6px] flex items-center">
      <span class="ml-[9px] text-[#a8a8a8] text-[27.500px]">Start</span>
      <svg class="ml-[17px] w-[24px] h-[24px]" viewBox="0 0 24 24"><path d="M3 3l18 18M21 3L3 21" stroke="#8c8c8c" stroke-width="6"/></svg>
    </div>
    <div class="ml-[2px] w-[293px] h-[65px] bg-[#3a3a3a] border-x-2 border-b-2 border-[#1e1e1e] rounded-b-[6px] flex items-center">
      <svg class="ml-[13px] w-[22px] h-[30px]"><use href="#doc"/></svg>
      <span class="ml-[25px] mt-[3px]">Unnamed : 1*</span>
      <svg class="ml-[31px] w-[24px] h-[24px]" viewBox="0 0 24 24"><path d="M3 3l18 18M21 3L3 21" stroke="#8c8c8c" stroke-width="6"/></svg>
    </div>
  </div>

  <!-- status bar -->
  <div class="h-[63px] shrink-0 flex items-center">
    <span class="ml-[10px] mt-[1px] text-[27.500px]">Create a perpendicular constraint between two lines</span>
    <div class="ml-auto flex gap-[13px] mb-[2px] mr-[3px]">
      <div class="w-[179px] h-[52px] rounded-[6px] border-2 border-[#0e0e0e] bg-gradient-to-b from-[#444444] to-[#363636] flex items-center">
        <svg class="ml-[4px] w-[26px] h-[24px]" viewBox="0 0 26 24"><rect width="26" height="24" fill="#d8c010"/><path d="M0 0l13 12L26 0M0 24l13-12 13 12" stroke="#a08c00" fill="none"/></svg>
        <span class="ml-[9px] text-[27.500px]">1</span>
        <svg class="ml-auto mr-[6px] w-[16px] h-[12px]"><use href="#arrow-light"/></svg>
      </div>
      <div class="w-[179px] h-[52px] rounded-[6px] border-2 border-[#0e0e0e] bg-gradient-to-b from-[#444444] to-[#363636] flex items-center">
        <svg class="ml-[38px] w-[19px] h-[28px]" viewBox="0 0 19 28"><rect x="1.500" y="1.500" width="16" height="25" rx="8" fill="none" stroke="#c8c8c8" stroke-width="2"/><path d="M9.500 6v5" stroke="#c8c8c8" stroke-width="1.500"/></svg>
        <span class="ml-[10px]">CAD</span>
        <svg class="ml-auto mr-[6px] w-[16px] h-[12px]"><use href="#arrow-light"/></svg>
      </div>
      <div class="w-[347px] h-[52px] rounded-[6px] border-2 border-[#0e0e0e] bg-gradient-to-b from-[#444444] to-[#363636] flex items-center">
        <span class="ml-[9px] whitespace-nowrap text-[27.500px]">227.49 mm x 100.00 mm</span>
        <svg class="ml-auto mr-[4px] w-[16px] h-[12px]"><use href="#arrow-light"/></svg>
      </div>
    </div>
  </div>

  <!-- tooltip -->
  <div class="absolute left-[1440px] top-[281px] w-[566px] h-[129px] bg-[#fefee0] border-[3px] border-[#1e1e1e] text-black text-[23.700px] leading-none shadow-[0_6px_16px_rgba(0,0,0,0.4)] pl-[6px] flex flex-col whitespace-nowrap">
    <div class="mt-[7px] text-[23.300px]"><b>Constrain perpendicular</b> (N)</div>
    <div class="mt-[20px]">Create a perpendicular constraint between two lines</div>
    <div class="mt-[19px] italic">Sketcher_ConstrainPerpendicular</div>
  </div>

  <!-- annotation arrow -->
  <svg class="absolute left-[1470px] top-[135px] w-[100px] h-[80px]" viewBox="1470 135 100 80"><path d="M1557 140L1504 186" stroke="#ee1c25" stroke-width="7" stroke-linecap="round"/><path d="M1477 207l16-32 21 22z" fill="#ee1c25"/></svg>
</div>
</body>
</html>
